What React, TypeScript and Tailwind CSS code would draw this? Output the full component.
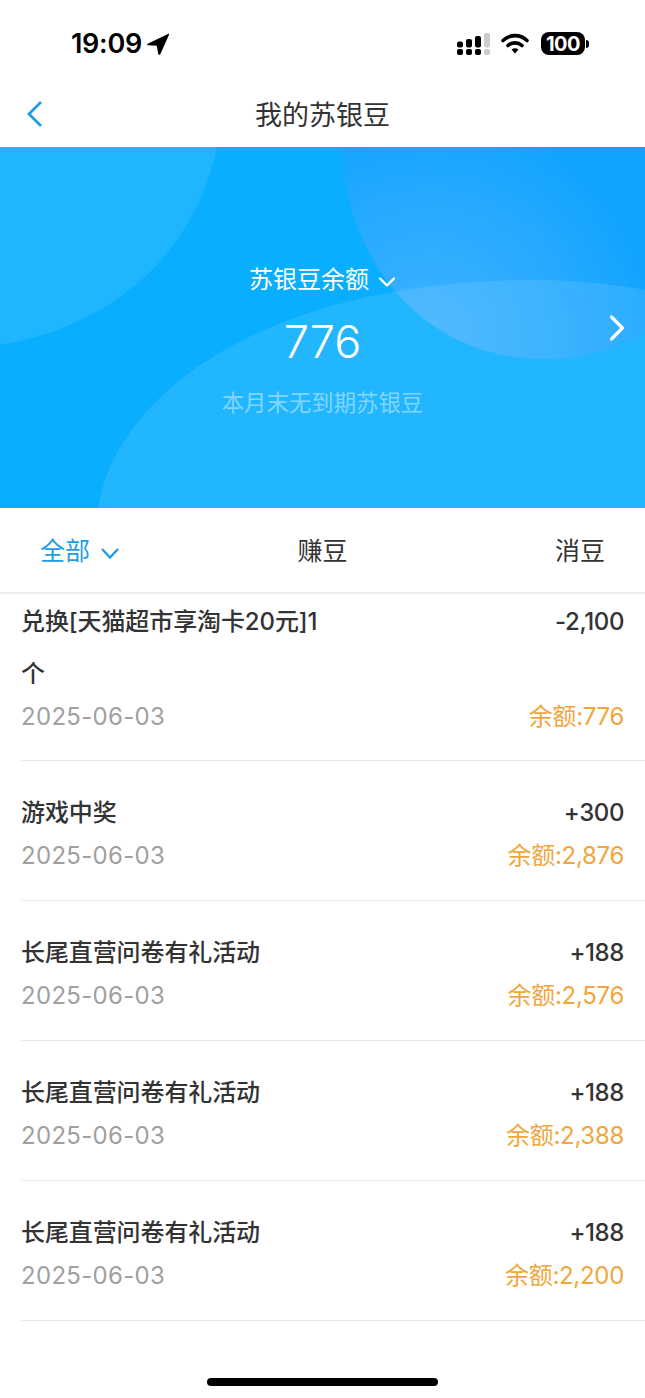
const records = [
  { title: "兑换[天猫超市享淘卡20元]1个", amount: "-2,100", balance: "余额:776", first: true },
  { title: "游戏中奖", amount: "+300", balance: "余额:2,876" },
  { title: "长尾直营问卷有礼活动", amount: "+188", balance: "余额:2,576" },
  { title: "长尾直营问卷有礼活动", amount: "+188", balance: "余额:2,388" },
  { title: "长尾直营问卷有礼活动", amount: "+188", balance: "余额:2,200" },
];

function StatusBar() {
  return (
    <div className="flex h-[87px] items-center justify-between pl-[71px] pr-[56px]">
      <div className="flex items-center gap-[5px]">
        <span className="text-[27px] font-semibold leading-none tracking-[-0.3px] text-black">19:09</span>
        <svg width="22" height="22" viewBox="0 0 18 21" preserveAspectRatio="none">
          <path d="M17.6 0.6 L0.6 10.2 C-0.2 10.7 0.1 11.8 1 11.8 L8 12.2 L9.2 20 C9.4 20.9 10.5 21 10.9 20.2 L18 1.6 C18.3 0.8 18.2 0.3 17.6 0.6 Z" fill="#000" />
        </svg>
      </div>
      <div className="flex items-center">
        <svg width="34" height="22" viewBox="0 0 34 22" className="mr-[11px]">
          <rect x="1" y="8.500" width="6" height="6" rx="2" fill="#000" />
          <rect x="10" y="6" width="6" height="8.500" rx="2" fill="#000" />
          <rect x="19" y="3" width="6" height="11.500" rx="2" fill="#000" />
          <rect x="28" y="0" width="6" height="14.500" rx="2" fill="#ccc" />
          <rect x="1" y="16" width="6" height="6" rx="2" fill="#000" />
          <rect x="10" y="16" width="6" height="6" rx="2" fill="#000" />
          <rect x="19" y="16" width="6" height="6" rx="2" fill="#000" />
          <rect x="28" y="16" width="6" height="6" rx="2" fill="#ccc" />
        </svg>
        <svg width="28" height="21" viewBox="0 0 28 21" className="mr-[12px]">
          <path d="M2 7.500 C9 1 19 1 26 7.500" fill="none" stroke="#000" strokeWidth="3.600" strokeLinecap="round" />
          <path d="M7 12.500 C11 9 17 9 21 12.500" fill="none" stroke="#000" strokeWidth="3.600" strokeLinecap="round" />
          <path d="M10.500 16.500 C12.500 14.700 15.500 14.700 17.500 16.500 L14 20.500 Z" fill="#000" />
        </svg>
        <div className="flex h-[23px] w-[44px] items-center justify-center rounded-[8px] bg-black text-[20px] font-bold leading-none tracking-[-0.5px] text-white">
          100
        </div>
        <div className="ml-[1px] h-[8px] w-[3px] rounded-r-full bg-black" />
      </div>
    </div>
  );
}

function Hero() {
  return (
    <div className="relative flex h-[361px] flex-col items-center overflow-hidden bg-[#09aeff] pt-[116px]">
      <svg className="absolute inset-0" width="645" height="361" viewBox="0 0 645 361">
        <defs>
          <radialGradient id="heroTopRight" gradientUnits="userSpaceOnUse" cx="430" cy="190" r="230">
            <stop offset="0" stopColor="#3eb2ff" />
            <stop offset="0.6" stopColor="#26aaff" />
            <stop offset="1" stopColor="#10a3ff" />
          </radialGradient>
        </defs>
        <path d="M0 0 H217 C196 100 120 178 0 198 Z" fill="#fff" fillOpacity="0.09" />
        <path d="M342 0 C345 110 420 212 545 212 C585 212 620 200 645 187 V0 Z" fill="url(#heroTopRight)" />
        <path d="M98 361 C115 250 260 135 530 133 C580 133 620 138 645 143 V361 Z" fill="#fff" fillOpacity="0.1" />
      </svg>
      <div className="relative flex items-center text-[24px] leading-[34px] text-white">
        <span>苏银豆余额</span>
        <svg width="18" height="12" viewBox="0 0 18 12" className="ml-[9px] mt-[3px]">
          <path d="M2 2.500 L9 9.500 L16 2.500" fill="none" stroke="#fff" strokeWidth="2.400" strokeLinecap="round" strokeLinejoin="round" />
        </svg>
      </div>
      <div className="relative mt-[17px] text-[45px] font-light leading-[56px] text-white">776</div>
      <div className="relative mt-[17px] text-[22.400px] leading-[32px] text-white/45">本月末无到期苏银豆</div>
      <svg className="absolute right-[19px] top-[167px]" width="18" height="28" viewBox="0 0 18 28">
        <path d="M3.500 3 L14.500 14 L3.500 25" fill="none" stroke="#fff" strokeWidth="3.200" strokeLinecap="round" strokeLinejoin="round" />
      </svg>
    </div>
  );
}

function Tabs() {
  return (
    <div className="grid h-[86px] grid-cols-3 items-center border-b-2 border-[#eeeeee] px-[40px] pt-[4px] text-[25px] text-[#333]">
      <div className="flex items-center text-[#1f9de6]">
        <span>全部</span>
        <svg width="20" height="13" viewBox="0 0 20 13" className="ml-[10px] mt-[3px]">
          <path d="M2 2 L10 10.500 L18 2" fill="none" stroke="#1f9de6" strokeWidth="2.400" />
        </svg>
      </div>
      <div className="text-center">赚豆</div>
      <div className="text-right">消豆</div>
    </div>
  );
}

function Row({ title, amount, balance, first }: { title: string; amount: string; balance: string; first?: boolean }) {
  return (
    <div className={`ml-[21px] border-b border-[#e8e8e8] pr-[21px] ${first ? "pt-[2px] pb-[26px]" : "pt-[26px] pb-[27px]"}`}>
      <div className="flex items-start justify-between">
        <div className="max-w-[300px] text-[24px] font-medium leading-[52px] tracking-[-0.1px] text-[#333]">{title}</div>
        <div className="text-[24px] font-medium leading-[52px] tracking-[-0.4px] text-[#333]">{amount}</div>
      </div>
      <div className="flex items-center justify-between text-[24px] leading-[34px]">
        <span className="tracking-[0.3px] text-[#a0a0a0]">2025-06-03</span>
        <span className="tracking-[-0.3px] text-[#f0a63c]">{balance}</span>
      </div>
    </div>
  );
}

export default function App() {
  return (
    <div className="min-h-[1398px] w-[645px] overflow-hidden bg-white font-['Inter','Noto_Sans_CJK_SC',sans-serif]">
      <StatusBar />
      {/* nav */}
      <div className="relative flex h-[60px] items-center justify-center">
        <svg className="absolute left-[26px] top-[13px]" width="18" height="28" viewBox="0 0 18 28">
          <path d="M15 2 L3 14 L15 26" fill="none" stroke="#1f9de6" strokeWidth="2.800" />
        </svg>
        <span className="mb-[2px] text-[27px] text-[#333]">我的苏银豆</span>
      </div>
      <Hero />
      <Tabs />
      {records.map((r, i) => (
        <Row key={i} {...r} />
      ))}
      <div className="mx-auto mt-[57px] h-[8px] w-[231px] rounded-full bg-black" />
    </div>
  );
}
